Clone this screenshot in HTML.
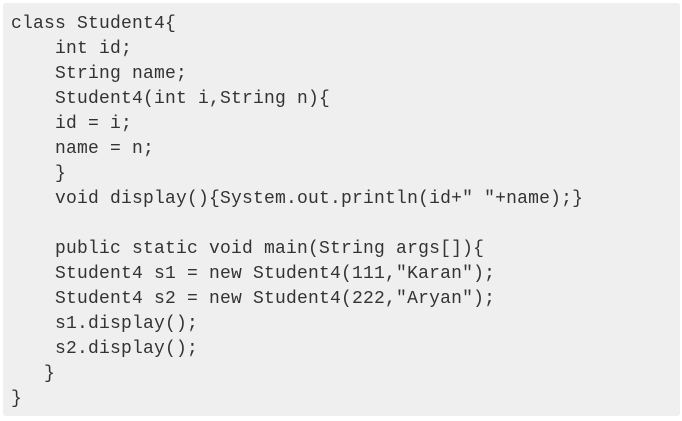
<!DOCTYPE html>
<html><head><style>
html,body{margin:0;padding:0;background:#fff;width:682px;height:421px;overflow:hidden}
.box{position:absolute;left:3px;top:3px;width:677px;height:413px;background:#efefef;border-radius:3px}
pre{margin:0;position:absolute;left:11px;top:12px;font-family:"Liberation Mono",monospace;font-size:18px;letter-spacing:0.2px;line-height:25px;color:#333}
</style></head><body>
<div class="box"></div>
<pre>class Student4{
    int id;
    String name;
    Student4(int i,String n){
    id = i;
    name = n;
    }
    void display(){System.out.println(id+" "+name);}

    public static void main(String args[]){
    Student4 s1 = new Student4(111,"Karan");
    Student4 s2 = new Student4(222,"Aryan");
    s1.display();
    s2.display();
   }
}</pre>
</body></html>
